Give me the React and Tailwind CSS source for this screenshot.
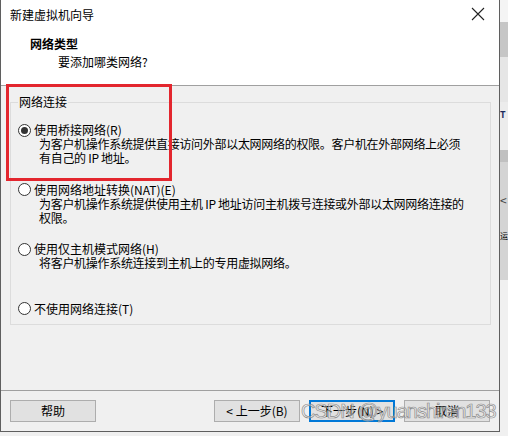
import React, { useState } from 'react';

const cjk = { fontFamily: '"Noto Sans CJK SC", "Liberation Sans", sans-serif' };

const options = [
  {
    id: 'bridge',
    label: '使用桥接网络(R)',
    desc: ['为客户机操作系统提供直接访问外部以太网网络的权限。客户机在外部网络上必须', '有自己的 IP 地址。'],
  },
  {
    id: 'nat',
    label: '使用网络地址转换(NAT)(E)',
    desc: ['为客户机操作系统提供使用主机 IP 地址访问主机拨号连接或外部以太网网络连接的', '权限。'],
  },
  {
    id: 'host',
    label: '使用仅主机模式网络(H)',
    desc: ['将客户机操作系统连接到主机上的专用虚拟网络。'],
  },
  {
    id: 'none',
    label: '不使用网络连接(T)',
    desc: [],
  },
];

const Radio = ({ checked }) => (
  <span className="w-[13px] h-[13px] rounded-full border border-[#333] bg-white flex items-center justify-center shrink-0">
    {checked && <span className="w-[7px] h-[7px] rounded-full bg-[#333]"></span>}
  </span>
);

const Button = ({ children, focused, className = '' }) => (
  <button
    className={`h-[22px] w-[86px] bg-[#e1e1e1] text-[12px] text-black flex items-center justify-center ${focused ? 'border-2 border-[#0078d7]' : 'border border-[#adadad]'} ${className}`}
  >
    {children}
  </button>
);

export default function App() {
  const [selected, setSelected] = useState('bridge');

  return (
    <div className="w-[508px] h-[436px] flex bg-[#f0f0f0] overflow-hidden text-black" style={cjk}>
      {/* Dialog */}
      <div className="w-[500px] h-[432px] flex flex-col border-l border-r border-b border-[#5f5f5f] bg-[#f0f0f0] relative">
        {/* Title bar */}
        <div className="h-[30px] bg-white flex items-center justify-between pl-[9px] pr-[14px]">
          <span className="text-[12px] leading-none">新建虚拟机向导</span>
          <svg width="14" height="14" viewBox="0 0 14 14" className="mt-[-2px]">
            <path d="M1 1 L13 13 M13 1 L1 13" stroke="#222" strokeWidth="1.1" fill="none" />
          </svg>
        </div>

        {/* Header */}
        <div className="h-[56px] bg-white border-b border-[#a0a0a0] flex flex-col pl-[29px] pt-[6px]">
          <span className="text-[12px] font-bold leading-[16px]">网络类型</span>
          <span className="text-[12px] leading-[16px] pl-[28px] mt-[2px]">要添加哪类网络?</span>
        </div>

        {/* Body */}
        <div className="flex-1 flex flex-col px-[9px] pt-[8px]">
          <fieldset className="border border-[#dcdcdc] h-[231px] w-[481px] pl-[7px] pr-0 pt-0 m-0">
            <legend className="text-[12px] px-[1px] leading-[16px]">网络连接</legend>
            <div className="flex flex-col pt-[13px]">
              {options.map((opt, i) => (
                <div
                  key={opt.id}
                  className={`flex flex-col ${i < 3 ? 'h-[59.5px]' : ''} cursor-default`}
                  onClick={() => setSelected(opt.id)}
                >
                  <div className="flex items-center gap-[3px] h-[14px]">
                    <Radio checked={selected === opt.id} />
                    <span className="text-[12px] leading-[14px] whitespace-nowrap">{opt.label}</span>
                  </div>
                  <div className="pl-[21px] flex flex-col">
                    {opt.desc.map((line) => (
                      <span key={line} className="text-[12px] leading-[14px] whitespace-nowrap tracking-[-0.3px]">
                        {line}
                      </span>
                    ))}
                  </div>
                </div>
              ))}
            </div>
          </fieldset>
        </div>

        {/* Footer */}
        <div className="h-[41px] border-t border-[#a0a0a0] flex items-start pt-[9px] px-[9px] relative">
          <Button>帮助</Button>
          <div className="flex-1"></div>
          <div className="flex gap-[9px]">
            <Button>&lt; 上一步(B)</Button>
            <Button focused>下一步(N) &gt;</Button>
            <Button>取消</Button>
          </div>
          {/* Watermark */}
          <span
            className="absolute left-[300px] top-[6px] text-[20px] leading-[28px] tracking-[-1px] whitespace-nowrap text-[rgba(255,255,255,0.4)] [-webkit-text-stroke:0.7px_#8c8c8c]"
            style={{ fontFamily: '"Liberation Sans", Arial, sans-serif' }}
          >
            CSDN @yuanshiren133
          </span>
        </div>

        {/* Red highlight */}
        <div className="absolute left-[5px] top-[84px] w-[166px] h-[97px] border-[3px] border-[#e3262e] pointer-events-none"></div>
      </div>

      {/* Background window strip */}
      <div className="flex-1 flex flex-col">
        <div className="h-[22px] bg-[#f4f4f4]"></div>
        <div className="h-[35px] bg-[#c6c6c6]"></div>
        <div className="h-[45px] bg-[#e6e6e6]"></div>
        <div className="h-[48px] bg-[#ececec] flex items-start">
          <span className="text-[9px] leading-none text-[#1a2a5a] font-bold pt-[8px]">T</span>
        </div>
        <div className="h-[12px] bg-[#c0c0c0]"></div>
        <div className="h-[118px] bg-[#d4d4d4] flex flex-col items-start pt-[32px] overflow-hidden">
          <span className="text-[12px] leading-none text-[#444]">&lt;</span>
          <span className="text-[8px] leading-none mt-[26px] text-black">运</span>
        </div>
        <div className="flex-1 bg-[#f0f0f0]"></div>
      </div>
    </div>
  );
}
